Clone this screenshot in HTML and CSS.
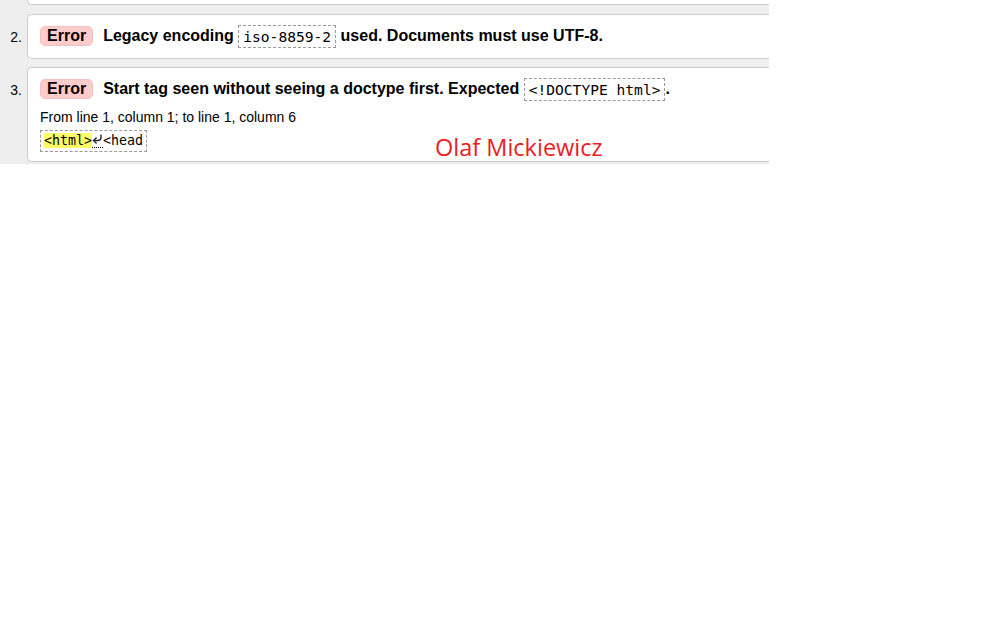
FILE: index.html
```html
<!DOCTYPE html>
<html>
<head>
<meta charset="utf-8">
<link rel="stylesheet" href="styles.css">
</head>
<body>
<div class="results">
  <ol class="messages">
    <li class="item item-clipped">
      <span class="num"></span>
      <div class="card card-clipped"></div>
    </li>
    <li class="item">
      <span class="num">2.</span>
      <div class="card">
        <p class="msg"><span class="badge">Error</span><span class="text">Legacy encoding <code class="code">iso-8859-2</code> used. Documents must use UTF-8.</span></p>
      </div>
    </li>
    <li class="item">
      <span class="num">3.</span>
      <div class="card card-detail">
        <p class="msg"><span class="badge">Error</span><span class="text">Start tag seen without seeing a doctype first. Expected <code class="code">&lt;!DOCTYPE html&gt;</code>.</span></p>
        <p class="loc">From line 1, column 1; to line 1, column 6</p>
        <p class="extract"><code class="excode"><b class="hl">&lt;html&gt;</b><span class="lf"><svg class="lf-icon" width="11" height="12" viewBox="0 0 11 12"><path d="M9 1.5 V4.5 A3 3 0 0 1 6 7.5 H1.8" fill="none" stroke="#2a2a2a" stroke-width="1.4"/><path d="M4.6 4.4 L1.5 7.5 L4.6 10.6" fill="none" stroke="#2a2a2a" stroke-width="1.4"/></svg></span>&lt;head</code></p>
      </div>
    </li>
  </ol>
  <div class="watermark">Olaf Mickiewicz</div>
</div>
</body>
</html>
```
FILE: styles.css
```css
html, body {
  margin: 0;
  padding: 0;
  background: #fff;
}
body {
  font-family: "Liberation Sans", Arial, sans-serif;
  color: #000;
}
.results {
  position: relative;
  width: 769px;
  background: #eee;
  padding-bottom: 2px;
}
.messages {
  list-style: none;
  margin: 0;
  padding: 0;
  display: flex;
  flex-direction: column;
  gap: 8px;
}
.item {
  display: flex;
  align-items: flex-start;
}
.num {
  width: 22px;
  flex: 0 0 22px;
  text-align: right;
  font-size: 14px;
  margin-right: 5px;
  padding-top: 15px;
  line-height: 16px;
}
.item-clipped .num { padding-top: 0; }
.card {
  flex: 1;
  background: #fff;
  border: 1px solid #ccc;
  border-right: none;
  border-radius: 5px 0 0 5px;
  padding: 9px 12px 10px;
}
.card-detail {
  padding-bottom: 9px;
}
.card-clipped {
  height: 4px;
  padding: 0;
  border-top: none;
  border-radius: 0 0 0 5px;
  margin-bottom: 1px;
}
.msg {
  margin: 0;
  display: flex;
  align-items: center;
  gap: 10px;
  height: 24px;
  font-size: 16px;
  font-weight: bold;
  line-height: 24px;
}
.badge {
  display: inline-block;
  background: #fcc;
  border: 1px solid #f2c0c0;
  border-radius: 5px;
  padding: 0 6px;
  line-height: 18px;
  font-weight: bold;
}
.code {
  display: inline-block;
  font-family: "DejaVu Sans Mono", monospace;
  font-weight: normal;
  font-size: 14.6px;
  line-height: 21px;
  padding: 0 4px;
  border: 1px dashed #999;
  vertical-align: middle;
}
.loc {
  margin: 6px 0 0;
  font-size: 14px;
  line-height: 20px;
}
.extract {
  margin: 3px 0 0;
  display: flex;
}
.excode {
  display: block;
  font-family: "DejaVu Sans Mono", monospace;
  font-size: 13.3px;
  line-height: 20px;
  height: 20px;
  padding: 0 3px;
  border: 1px dashed #999;
}
.hl {
  font-weight: normal;
  background: #ff6;
}
.lf {
  display: inline-block;
  width: 11px;
  height: 16px;
  border-bottom: 1px dotted #000;
  vertical-align: -3px;
  line-height: 0;
}
.lf-icon {
  display: block;
  margin-top: 2px;
}
.watermark {
  position: absolute;
  left: 435px;
  top: 131px;
  font-family: "Open Sans", sans-serif;
  font-size: 23.5px;
  line-height: 32px;
  color: #ed1c24;
}
```
